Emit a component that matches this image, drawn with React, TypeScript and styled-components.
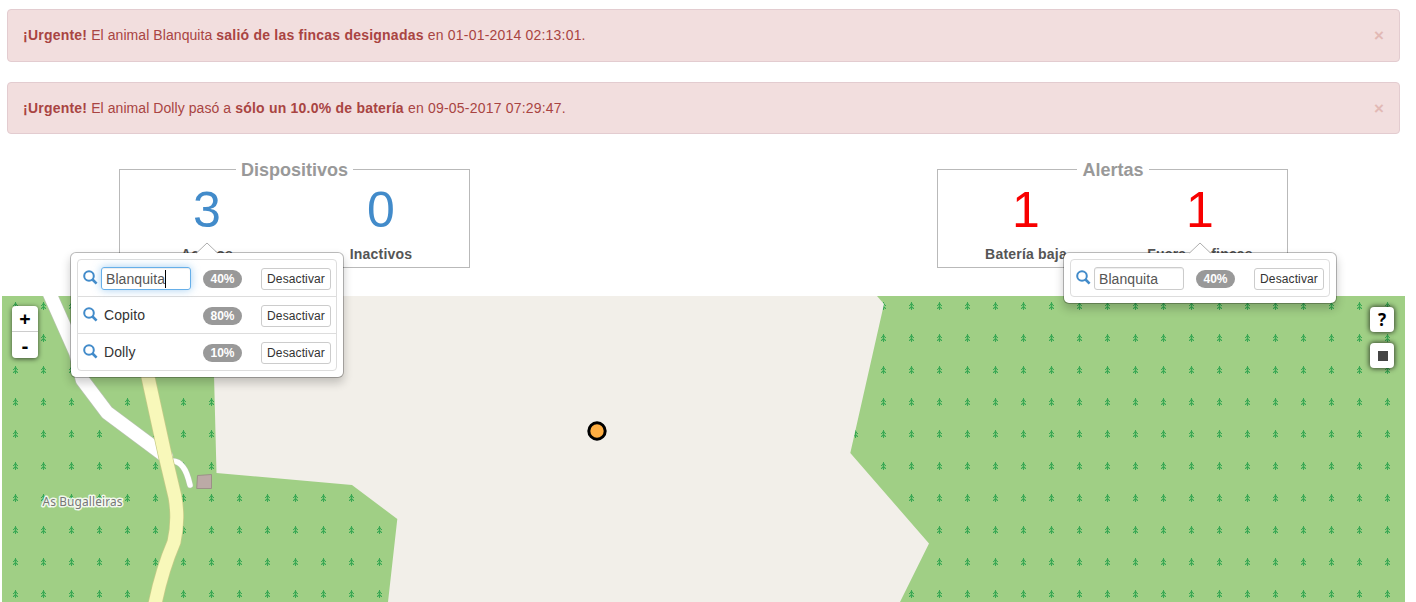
import React from "react";
import styled, { createGlobalStyle, css } from "styled-components";

const Global = createGlobalStyle`
  * { box-sizing: border-box; }
  body {
    margin: 0;
    background: #fff;
    color: #333;
    font: 14px/20px "Liberation Sans", Arial, sans-serif;
    overflow: hidden;
  }
`;

const Page = styled.div`
  width: 1416px;
  height: 602px;
  display: flex;
  flex-direction: column;
  overflow: hidden;
`;

const Alerts = styled.div`
  display: grid;
  grid-template-rows: 53px 52px;
  gap: 20px;
  padding: 9px 16px 0 7px;
`;

const Alert = styled.div`
  display: flex;
  align-items: flex-start;
  justify-content: space-between;
  padding: 15px 15px 0 15px;
  background: #f2dede;
  border: 1px solid #e3ccd0;
  border-radius: 4px;
  color: #a94442;
  letter-spacing: 0.07px;
  b { letter-spacing: 0.22px; }
`;

const Stamp = styled.span`
  letter-spacing: 0.2px;
`;

const Close = styled.button`
  padding: 1px 0 0;
  border: 0;
  background: none;
  font: bold 17px/20px "Liberation Sans", Arial, sans-serif;
  color: #e2b9b5;
`;

const Summary = styled.div`
  display: grid;
  grid-template-columns: 351px 351px;
  column-gap: 467px;
  padding: 26px 0 0 119px;
  height: 162px;
`;

const Box = styled.fieldset<{ $inset?: number }>`
  margin: 0;
  padding: 0;
  height: 108px;
  min-width: 0;
  border: 1px solid #b9b9b9;
  display: grid;
  grid-template-columns: 174px 174px;
  padding-left: ${(p) => p.$inset ?? 0}px;
`;

const Legend = styled.legend`
  margin: 0 auto;
  padding: 1px 5px 0;
  font-size: 18px;
  line-height: 18px;
  font-weight: bold;
  color: #999;
`;

const Stat = styled.div`
  position: relative;
  display: flex;
  flex-direction: column;
  align-items: center;
  height: 89px;
`;

const Figure = styled.span<{ $tone: string }>`
  font-size: 50px;
  line-height: 50px;
  margin-top: 6px;
  color: ${(p) => p.$tone};
`;

const Caption = styled.span`
  margin-top: 9px;
  font-weight: bold;
  letter-spacing: 0.2px;
  color: #555;
  white-space: nowrap;
`;

const PopoverBox = styled.div`
  position: absolute;
  z-index: 5;
  top: 73px;
  left: 50%;
  width: 274px;
  margin-left: -137px;
  padding: 6px;
  background: #fff;
  border: 1px solid rgba(0, 0, 0, 0.25);
  background-clip: padding-box;
  border-radius: 6px;
  box-shadow: 0 5px 10px rgba(0, 0, 0, 0.2);
`;

const Arrow = styled.svg`
  position: absolute;
  top: -11px;
  left: 125px;
`;

const List = styled.div`
  border: 1px solid #ddd;
  border-radius: 4px;
`;

const Row = styled.div`
  display: grid;
  grid-template-columns: 18px 90px 1fr 70px;
  align-items: center;
  height: 36px;
  padding: 1px 5px 0;
  & + & {
    height: 37px;
    border-top: 1px solid #ddd;
  }
`;

const Name = styled.span`
  padding-left: 3px;
  margin-top: -1px;
  letter-spacing: 0.1px;
  color: #333;
`;

const NameField = styled.span<{ $focused?: boolean }>`
  display: flex;
  align-items: center;
  height: 23px;
  padding-left: 4px;
  border: 1px solid #ccc;
  border-radius: 3px;
  color: #555;
  letter-spacing: 0.08px;
  box-shadow: inset 0 1px 1px rgba(0, 0, 0, 0.075);
  ${(p) =>
    p.$focused &&
    css`
      border-color: #66afe9;
      box-shadow: inset 0 1px 1px rgba(0, 0, 0, 0.075), 0 0 8px rgba(102, 175, 233, 0.6);
    `}
`;

const Caret = styled.i`
  width: 1px;
  height: 18px;
  background: #000;
`;

const Badge = styled.span`
  justify-self: start;
  margin-left: 12px;
  width: 39px;
  height: 18px;
  border-radius: 9px;
  background: #999;
  color: #fff;
  font-size: 12px;
  font-weight: bold;
  line-height: 18px;
  text-align: center;
`;

const SmallButton = styled.button`
  height: 22px;
  padding: 0;
  border: 1px solid #ccc;
  border-radius: 3px;
  background: #fff;
  color: #333;
  font: 12px/18px "Liberation Sans", Arial, sans-serif;
  letter-spacing: 0.12px;
`;

const MapPane = styled.div`
  position: relative;
  width: 1403px;
  height: 306px;
  margin-left: 2px;
`;

const MapDrawing = styled.svg`
  display: block;
`;

const ControlStack = styled.div<{ $side: "left" | "right" }>`
  position: absolute;
  top: ${(p) => (p.$side === "left" ? 10 : 11)}px;
  ${(p) => (p.$side === "left" ? "left: 10px;" : "right: 11px;")}
  display: flex;
  flex-direction: column;
  gap: ${(p) => (p.$side === "left" ? 0 : 11)}px;
  border-radius: 4px;
  box-shadow: ${(p) => (p.$side === "left" ? "0 1px 5px rgba(0,0,0,.65)" : "none")};
`;

const ZoomKey = styled.button`
  width: 26px;
  height: 26px;
  padding: 0;
  border: 0;
  background: #fff;
  font: bold 20px/25px "Noto Sans", sans-serif;
  color: #000;
  &:first-child { border-bottom: 1px solid #ccc; border-radius: 4px 4px 0 0; }
  &:last-child { border-radius: 0 0 4px 4px; }
`;

const MapKey = styled.button`
  display: flex;
  align-items: center;
  justify-content: center;
  width: 24px;
  height: 25px;
  padding: 0;
  border: 0;
  border-radius: 4px;
  background: #fff;
  color: #000;
  font: bold 17px/23px "Noto Sans", sans-serif;
  box-shadow: 0 0 5px 1px rgba(0, 0, 0, 0.65);
`;

const StopMark = styled.i`
  width: 10px;
  height: 10px;
  margin-left: 2px;
  margin-top: 1px;
  background: #444;
`;

const Lens = styled.svg`
  margin-top: -3px;
`;

const SearchIcon = () => (
  <Lens width="15" height="15" viewBox="0 0 15 15" fill="none" stroke="#428bca">
    <circle cx="6" cy="6" r="4.800" strokeWidth="2" />
    <path d="M9.500 9.500L13.600 13.600" strokeWidth="2.600" />
  </Lens>
);

type Device = { name: string; battery: string; field?: boolean; focused?: boolean };

const Popover = ({ devices }: { devices: Device[] }) => (
  <PopoverBox>
    <Arrow width="22" height="12" viewBox="0 0 22 12">
      <path d="M0.5 11L11 1L21.5 11V12H0.5Z" fill="#fff" />
      <path d="M0.5 11L11 1L21.5 11" fill="none" stroke="#999" strokeWidth=".8" />
    </Arrow>
    <List>
      {devices.map((d) => (
        <Row key={d.name}>
          <SearchIcon />
          {d.field ? (
            <NameField $focused={d.focused}>
              {d.name}
              {d.focused && <Caret />}
            </NameField>
          ) : (
            <Name>{d.name}</Name>
          )}
          <Badge>{d.battery}</Badge>
          <SmallButton>Desactivar</SmallButton>
        </Row>
      ))}
    </List>
  </PopoverBox>
);

const WHITE_ROAD = "M48 290L76 353L82.500 380L107 412.500L166 456.500";
const YELLOW_ROAD = "M142 350L148 377L165.500 457L175 497Q179 520 174 542Q162 570 155 604";
const LANE = "M172 461Q179 461 183 467Q187 472 190 485";

const FieldMap = () => (
  <MapDrawing width="1403" height="306" viewBox="2 296 1403 306">
    <defs>
      <pattern id="trees" patternUnits="userSpaceOnUse" x="1" y="290" width="28" height="32">
        <rect width="28" height="32" fill="#a0cf85" />
        <path d="M13 13h3v2h1v1h-5v-1h1zM13 16h3v1h1v2h-5v-2h1z" fill="#7cc576" />
        <path
          d="M14 12h1v8h-1zM13 14h1v1h-1zM15 14h1v1h-1zM12 15h1v1h-1zM16 15h1v1h-1zM13 17h1v1h-1zM15 17h1v1h-1zM12 18h1v1h-1zM16 18h1v1h-1z"
          fill="#3aa753"
        />
      </pattern>
    </defs>
    <rect x="2" y="296" width="1403" height="306" fill="url(#trees)" />
    <path d="M120 428h14v11h-14z" fill="#a0cf85" />
    <path
      d="M212 296H877L884 304L850.300 453L929 543.500L900 602H388L397.300 519L352 485L216.500 473Z"
      fill="#f2efe9"
    />
    <path d="M196.700 488.500L197.500 475.500L211.500 474.500V488.500Z" fill="#bcaaa6" stroke="#968783" strokeWidth=".8" />
    <g fill="none" strokeLinejoin="round" strokeLinecap="round">
      <path d={WHITE_ROAD} stroke="#b5c4ac" strokeWidth="15" />
      <path d={LANE} stroke="#b5c4ac" strokeWidth="6.500" />
      <path d={WHITE_ROAD} stroke="#fff" strokeWidth="13.600" />
      <path d={LANE} stroke="#fff" strokeWidth="5.500" />
      <path d={YELLOW_ROAD} stroke="#c6cb88" strokeWidth="14.500" />
      <path d={YELLOW_ROAD} stroke="#f8f8ba" strokeWidth="13" />
    </g>
    <text
      x="42.500"
      y="506"
      fontFamily="'Noto Sans', sans-serif"
      fontSize="12"
      fill="#777"
      stroke="#fff"
      strokeOpacity=".85"
      strokeWidth="3"
      strokeLinejoin="round"
      paintOrder="stroke"
      textLength="80"
    >
      As Bugalleiras
    </text>
    <circle cx="597" cy="431" r="8.200" fill="#ffae42" stroke="#000" strokeWidth="3" />
  </MapDrawing>
);

export default function App() {
  return (
    <>
      <Global />
      <Page>
        <Alerts>
          <Alert>
            <span>
              <b>¡Urgente!</b> El animal Blanquita <b>salió de las fincas designadas</b>
              <Stamp> en 01-01-2014 02:13:01.</Stamp>
            </span>
            <Close>×</Close>
          </Alert>
          <Alert>
            <span>
              <b>¡Urgente!</b> El animal Dolly pasó a <b>sólo un 10.0% de batería</b>
              <Stamp> en 09-05-2017 07:29:47.</Stamp>
            </span>
            <Close>×</Close>
          </Alert>
        </Alerts>
        <Summary>
          <Box>
            <Legend>Dispositivos</Legend>
            <Stat>
              <Figure $tone="#428bca">3</Figure>
              <Caption>Activos</Caption>
              <Popover
                devices={[
                  { name: "Blanquita", battery: "40%", field: true, focused: true },
                  { name: "Copito", battery: "80%" },
                  { name: "Dolly", battery: "10%" },
                ]}
              />
            </Stat>
            <Stat>
              <Figure $tone="#428bca">0</Figure>
              <Caption>Inactivos</Caption>
            </Stat>
          </Box>
          <Box $inset={1}>
            <Legend>Alertas</Legend>
            <Stat>
              <Figure $tone="#f80000">1</Figure>
              <Caption>Batería baja</Caption>
            </Stat>
            <Stat>
              <Figure $tone="#f80000">1</Figure>
              <Caption>Fuera de fincas</Caption>
              <Popover devices={[{ name: "Blanquita", battery: "40%", field: true }]} />
            </Stat>
          </Box>
        </Summary>
        <MapPane>
          <FieldMap />
          <ControlStack $side="left">
            <ZoomKey>+</ZoomKey>
            <ZoomKey>-</ZoomKey>
          </ControlStack>
          <ControlStack $side="right">
            <MapKey>?</MapKey>
            <MapKey>
              <StopMark />
            </MapKey>
          </ControlStack>
        </MapPane>
      </Page>
    </>
  );
}
